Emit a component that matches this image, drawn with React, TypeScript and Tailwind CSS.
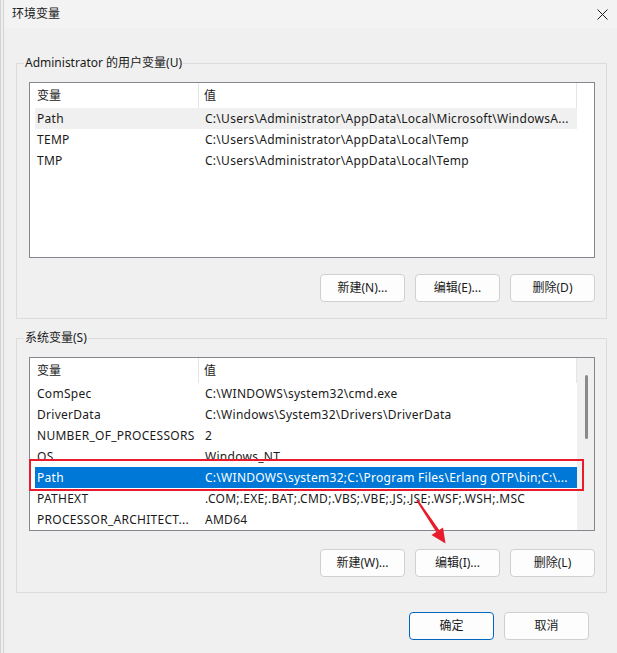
import React from 'react';

type Row = { name: string; value: string; state?: 'hover' | 'selected' };

const userVars: Row[] = [
  { name: 'Path', value: 'C:\\Users\\Administrator\\AppData\\Local\\Microsoft\\WindowsA...', state: 'hover' },
  { name: 'TEMP', value: 'C:\\Users\\Administrator\\AppData\\Local\\Temp' },
  { name: 'TMP', value: 'C:\\Users\\Administrator\\AppData\\Local\\Temp' },
];

const systemVars: Row[] = [
  { name: 'ComSpec', value: 'C:\\WINDOWS\\system32\\cmd.exe' },
  { name: 'DriverData', value: 'C:\\Windows\\System32\\Drivers\\DriverData' },
  { name: 'NUMBER_OF_PROCESSORS', value: '2' },
  { name: 'OS', value: 'Windows_NT' },
  { name: 'Path', value: 'C:\\WINDOWS\\system32;C:\\Program Files\\Erlang OTP\\bin;C:\\...', state: 'selected' },
  { name: 'PATHEXT', value: '.COM;.EXE;.BAT;.CMD;.VBS;.VBE;.JS;.JSE;.WSF;.WSH;.MSC' },
  { name: 'PROCESSOR_ARCHITECT...', value: 'AMD64' },
];

function WinButton({ label, primary = false }: { label: string; primary?: boolean }) {
  return (
    <button
      className={`w-[85px] h-[28px] rounded-[4px] bg-[#fdfdfd] text-[12px] text-[#1a1a1a] flex items-center justify-center ${
        primary ? 'border border-[#0067c0]' : 'border border-[#d0d0d0]'
      }`}
    >
      {label}
    </button>
  );
}

function VarList({ rows, height, scroll = false }: { rows: Row[]; height: string; scroll?: boolean }) {
  return (
    <div className={`${height} border border-[#828790] bg-white flex overflow-hidden`}>
      <div className="w-[547px] flex flex-col">
        <div className="h-[25px] flex items-stretch border-r border-[#e5e5e5] shrink-0">
          <div className="w-[169px] pl-[7px] flex items-center border-r border-[#e5e5e5]">变量</div>
          <div className="flex-1 pl-[5px] flex items-center">值</div>
        </div>
        {rows.map((r) => (
          <div
            key={r.name}
            className={`ml-[5px] h-[21px] flex items-center whitespace-nowrap shrink-0 tracking-[0.28px] ${
              r.state === 'selected' ? 'bg-[#0078d7] text-white' : r.state === 'hover' ? 'bg-[#f0f0f0]' : ''
            }`}
          >
            <div className="w-[164px] pl-[2px] overflow-hidden">{r.name}</div>
            <div className="flex-1 pl-[6px] overflow-hidden">{r.value}</div>
          </div>
        ))}
      </div>
      {scroll ? (
        <div className="flex-1 bg-[#f0f0f0] flex justify-center pt-[17px]">
          <div className="w-[3px] h-[64px] rounded-full bg-[#8a8a8a] ml-[2px]" />
        </div>
      ) : (
        <div className="flex-1" />
      )}
    </div>
  );
}

function Group({ title, height, children }: { title: string; height: string; children: React.ReactNode }) {
  return (
    <div className={`relative ${height} border border-[#dcdcdc] pt-[18px] pl-[12px] pr-[11px]`}>
      <span className="absolute -top-[9px] left-[7px] px-[1px] bg-[#f0f0f0] leading-[16px]">{title}</span>
      {children}
    </div>
  );
}

export default function App() {
  return (
    <div
      className="relative w-[617px] h-[653px] bg-[#f0f0f0] text-[12px] text-[#1a1a1a] flex overflow-hidden"
      style={{ fontFamily: '"Noto Sans", "Noto Sans CJK SC", sans-serif' }}
    >
      <div className="w-[4px] h-full border-l border-r border-[#d2d2d2]" />
      <div className="flex-1 flex flex-col">
        <div className="h-[28px] bg-[#f3f3f3] flex items-center justify-between pl-[8px] pr-[8px]">
          <span>环境变量</span>
          <svg width="11" height="11" viewBox="0 0 11 11" className="mr-[1px]">
            <path d="M0.5 0.5 L10.5 10.5 M10.5 0.5 L0.5 10.5" stroke="#1a1a1a" strokeWidth="1" />
          </svg>
        </div>

        <div className="pl-[12px] w-[603px] flex flex-col">
          <div className="mt-[35px]">
            <Group title="Administrator 的用户变量(U)" height="h-[256px]">
              <VarList rows={userVars} height="h-[176px]" />
              <div className="mt-[16px] flex justify-end gap-[10px]">
                <WinButton label="新建(N)..." />
                <WinButton label="编辑(E)..." />
                <WinButton label="删除(D)" />
              </div>
            </Group>
          </div>

          <div className="mt-[19px]">
            <Group title="系统变量(S)" height="h-[255px]">
              <VarList rows={systemVars} height="h-[174px]" scroll />
              <div className="mt-[18px] flex justify-end gap-[10px]">
                <WinButton label="新建(W)..." />
                <WinButton label="编辑(I)..." />
                <WinButton label="删除(L)" />
              </div>
            </Group>
          </div>

          <div className="mt-[19px] flex justify-end gap-[10px] pr-[18px]">
            <WinButton label="确定" primary />
            <WinButton label="取消" />
          </div>
        </div>
      </div>

      {/* red annotation box and arrow */}
      <div className="absolute left-[29px] top-[459px] w-[555px] h-[32px] border-2 border-[#e81c2a]" />
      <svg className="absolute left-[405px] top-[495px]" width="45" height="52" viewBox="0 0 45 52">
        <polygon points="11.2,5.5 12.8,4.5 34.2,35 31.2,37" fill="#e81c2a" />
        <polygon points="40.5,48.5 26.5,40 38,32.5" fill="#e81c2a" />
      </svg>
    </div>
  );
}
